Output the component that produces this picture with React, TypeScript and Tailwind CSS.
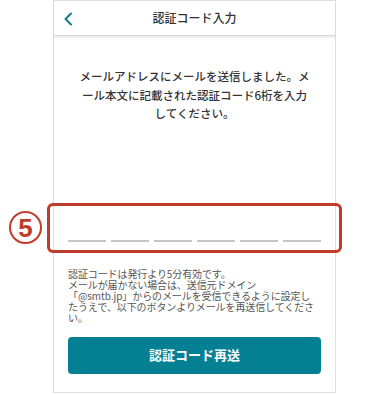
import React from "react";

const JP = { fontFamily: '"Noto Sans CJK JP", "Noto Sans", sans-serif' };

export default function App() {
  return (
    <div className="relative w-[390px] h-[394px] bg-white overflow-hidden" style={JP}>
      <div className="ml-[53px] w-[283px] h-[393px] border border-[#dedede] bg-white flex flex-col">
        <div className="relative h-[35px] shrink-0 border-b border-[#d6d6d6] shadow-[0_2px_2px_rgba(0,0,0,0.07)] flex items-center justify-center">
          <svg className="absolute left-[9px] top-[11px]" width="10" height="14" viewBox="0 0 10 14">
            <path d="M8 1.5 L2.5 7 L8 12.5" fill="none" stroke="#13788a" strokeWidth="2" strokeLinecap="round" strokeLinejoin="round" />
          </svg>
          <span className="text-[12px] font-medium text-[#333] leading-none">認証コード入力</span>
        </div>
        <p className="mt-[31px] text-center text-[11.5px] leading-[18.5px] font-medium text-[#333]">
          メールアドレスにメールを送信しました。メ<br />
          ール本文に記載された認証コード6桁を入力<br />
          してください。
        </p>
        <div className="mt-[117px] px-[14px] flex gap-[5px]">
          {[0, 1, 2, 3, 4, 5].map((i) => (
            <div key={i} className="w-[38px] h-[2px] bg-[#c4c4c4]" />
          ))}
        </div>
        <p className="mt-[26px] px-[14px] text-[10px] leading-[11px] text-[#555] tracking-[-0.1px]">
          認証コードは発行より5分有効です。<br />
          メールが届かない場合は、送信元ドメイン<br />
          「@smtb.jp」からのメールを受信できるように設定し<br />
          たうえで、以下のボタンよりメールを再送信してくださ<br />
          い。
        </p>
        <div className="mt-[14px] px-[14px]">
          <button className="w-full h-[37px] rounded-[4px] bg-[#057f92] text-white text-[13px] font-bold flex items-center justify-center">
            認証コード再送
          </button>
        </div>
      </div>
      <div className="absolute left-[47px] top-[203px] w-[295px] h-[50px] border-[3px] border-[#c03c2a] rounded-[6px]" />
      <div className="absolute left-[9px] top-[211px] w-[33px] h-[33px] rounded-full border-[2.5px] border-[#c03c2a] flex items-center justify-center">
        <span className="text-[#c03c2a] text-[26px] font-bold leading-none" style={{ fontFamily: '"Liberation Sans", Arial, sans-serif' }}>5</span>
      </div>
    </div>
  );
}
